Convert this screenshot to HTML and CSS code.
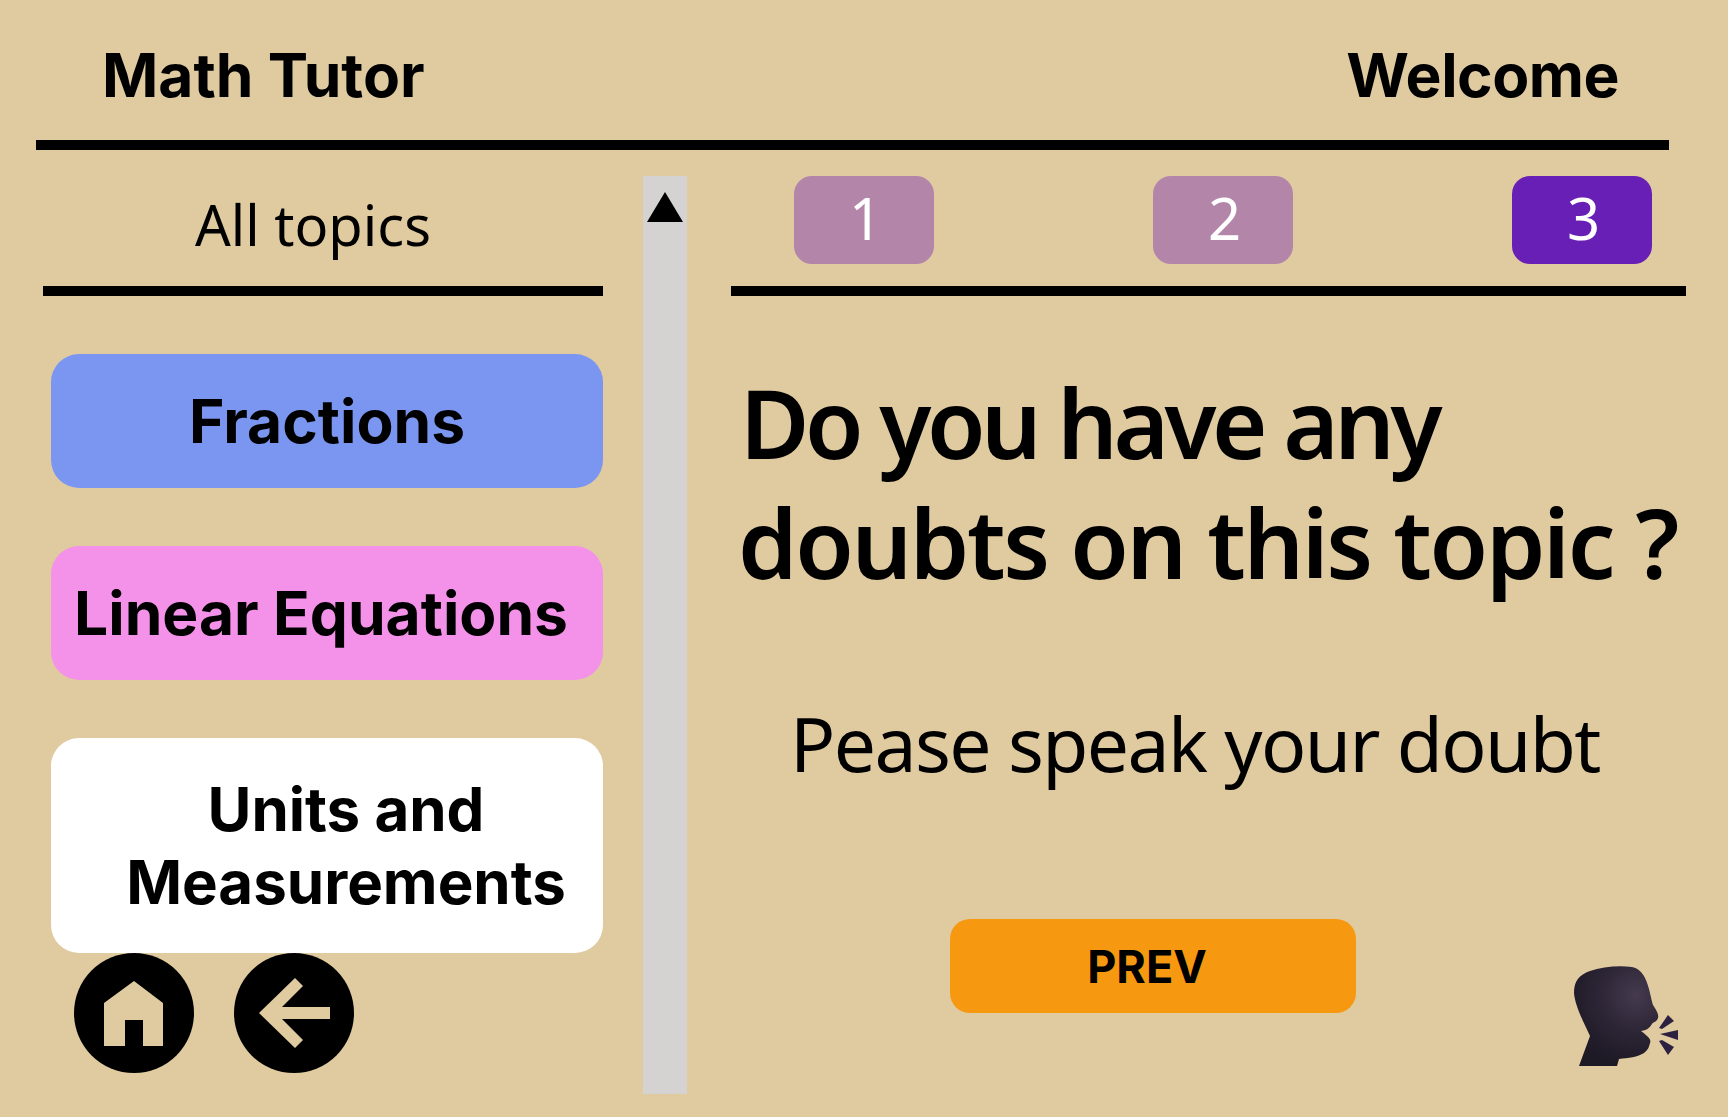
FILE: index.html
```html
<!DOCTYPE html>
<html lang="en">
<head>
    <meta charset="UTF-8">
    <title>Math Tutor</title>
    <link rel="stylesheet" href="styles.css">
</head>
<body>

    <header class="top-bar">
        <span>Math Tutor</span>
        <span class="welcome">Welcome</span>
    </header>

    <main class="content">
        <section class="topics">
            <h2 class="topics-title">All topics</h2>
            <div class="topic-list">
                <button class="topic topic-blue">Fractions</button>
                <button class="topic topic-pink">Linear Equations</button>
                <button class="topic topic-white">Units and<br>Measurements</button>
            </div>
            <div class="nav-icons">
                <button class="round-btn" aria-label="Home">
                    <svg viewBox="0 0 120 120" width="120" height="120">
                        <path d="M30 50 L60 28 L89 50 V93 H69 V67 H51 V93 H30 Z" fill="#e0cba0"/>
                    </svg>
                </button>
                <button class="round-btn" aria-label="Back">
                    <svg viewBox="0 0 120 120" width="120" height="120">
                        <path d="M61 25 L69 33 L48 54 H96 V66 H48 L69 87 L61 95 L25 60 Z" fill="#e0cba0"/>
                    </svg>
                </button>
            </div>
        </section>

        <div class="scrollbar">
            <div class="scroll-arrow"></div>
        </div>

        <section class="question">
            <div class="tabs">
                <div class="tab tab-done">1</div>
                <div class="tab tab-done">2</div>
                <div class="tab tab-active">3</div>
            </div>
            <h1 class="question-title">
                <span class="title-line title-first">Do you have any</span>
                <span class="title-line">doubts on this topic ?</span>
            </h1>
            <p class="question-hint">Pease speak your doubt</p>
            <div class="question-bottom">
                <button class="prev-btn">PREV</button>
                <svg class="speak-icon" viewBox="0 0 160 130" width="160" height="130">
                    <defs>
                        <radialGradient id="headShade" gradientUnits="userSpaceOnUse" cx="96" cy="44" r="72">
                            <stop offset="0" stop-color="#453a4e"/>
                            <stop offset="0.55" stop-color="#2b2434"/>
                            <stop offset="1" stop-color="#1d1925"/>
                        </radialGradient>
                    </defs>
                    <path d="M39 115 L50 85 C44 72 35 55 34 42 C34 30 39 24 50 20 C62 16 78 14 92 16 C102 18 106 27 109 38 C111 46 112 51 113 54 C117 60 119 64 118 67 C117 71 113 71 112 73 C110 76 108 79 101 80 C106 84 112 88 110 92 C109 96 108 99 104 102 C98 106 88 107 79 108 L77 115 Z" fill="url(#headShade)"/>
                    <path d="M119 77 L128 64 L134 70 L122 78 Z M120 83 L138 79 L138 89 Z M119 90 L122 89 L134 96 L128 104 Z" fill="#2c2140"/>
                </svg>
            </div>
        </section>
    </main>

</body>
</html>
```

FILE: styles.css
```css
* {
    box-sizing: border-box;
}

body {
    margin: 0;
    height: 1117px;
    overflow: hidden;
    background-color: #e0cba0;
    color: #000;
    font-family: Inter, sans-serif;
}

button {
    font-family: Inter, sans-serif;
    border: none;
    color: #000;
}

.top-bar {
    margin: 0 59px 0 36px;
    height: 150px;
    padding: 35px 50px 0 66px;
    display: flex;
    justify-content: space-between;
    border-bottom: 10px solid #000;
    font-size: 60.500px;
    font-weight: 700;
    line-height: 80px;
}

.welcome {
    letter-spacing: -0.500px;
}

.content {
    display: flex;
    margin-top: 26px;
    padding-left: 43px;
}

/* left column */
.topics {
    width: 560px;
}

.topics-title {
    margin: 0;
    height: 120px;
    border-bottom: 10px solid #000;
    padding: 13px 20px 0 0;
    text-align: center;
    font-family: "Noto Sans", sans-serif;
    font-size: 56px;
    font-weight: 400;
    line-height: 70px;
}

.topic-list {
    margin: 58px 0 0 8px;
    display: flex;
    flex-direction: column;
    gap: 58px;
}

.topic {
    width: 552px;
    height: 134px;
    border-radius: 28px;
    font-size: 60.500px;
    font-weight: 700;
    line-height: 73px;
    padding: 0;
}

.topic-blue {
    background-color: #7b96f1;
}

.topic-pink {
    padding-right: 12px;
    background-color: #f491e8;
}

.topic-white {
    height: 215px;
    padding-left: 38px;
    font-size: 60px;
    background-color: #fff;
}

.nav-icons {
    display: flex;
    gap: 40px;
    margin-left: 31px;
}

.round-btn {
    width: 120px;
    height: 120px;
    padding: 0;
    border-radius: 50%;
    background-color: #000;
}

.round-btn svg {
    display: block;
}

/* scrollbar */
.scrollbar {
    width: 44px;
    height: 918px;
    margin-left: 40px;
    padding-top: 16px;
    background-color: #d4d3d1;
}

.scroll-arrow {
    width: 0;
    height: 0;
    margin: 0 auto;
    border-left: 18px solid transparent;
    border-right: 18px solid transparent;
    border-bottom: 30px solid #000;
}

/* right column */
.question {
    width: 955px;
    margin-left: 44px;
}

.tabs {
    height: 120px;
    padding: 0 34px 0 63px;
    display: flex;
    justify-content: space-between;
    border-bottom: 10px solid #000;
}

.tab {
    width: 140px;
    height: 88px;
    padding-left: 3px;
    border-radius: 18px;
    color: #fff;
    text-align: center;
    font-family: "Noto Sans", sans-serif;
    font-size: 58px;
    line-height: 84px;
}

.tab-done {
    background-color: #b285a9;
}

.tab-active {
    background-color: #681fb5;
}

.question-title {
    margin: 0;
    padding: 66px 0 0 7px;
    font-family: "Noto Sans", sans-serif;
    font-size: 95px;
    font-weight: 600;
    letter-spacing: -2.300px;
    line-height: 120px;
    white-space: nowrap;
}

.title-line {
    display: block;
}

.title-first {
    padding-left: 2px;
    letter-spacing: -4.500px;
}

.question-hint {
    margin: 96px 0 0 0;
    padding-left: 59px;
    font-family: "Noto Sans", sans-serif;
    font-size: 75px;
    letter-spacing: -1.600px;
    line-height: 90px;
    white-space: nowrap;
}

.question-bottom {
    margin-top: 131px;
    display: flex;
    align-items: flex-start;
    padding-left: 219px;
}

.prev-btn {
    flex-shrink: 0;
    width: 406px;
    height: 94px;
    padding: 0 12px 0 0;
    border-radius: 20px;
    background-color: #f79910;
    font-size: 45px;
    font-weight: 700;
}

.speak-icon {
    display: block;
    flex-shrink: 0;
    margin: 32px 0 0 184px;
}
```
